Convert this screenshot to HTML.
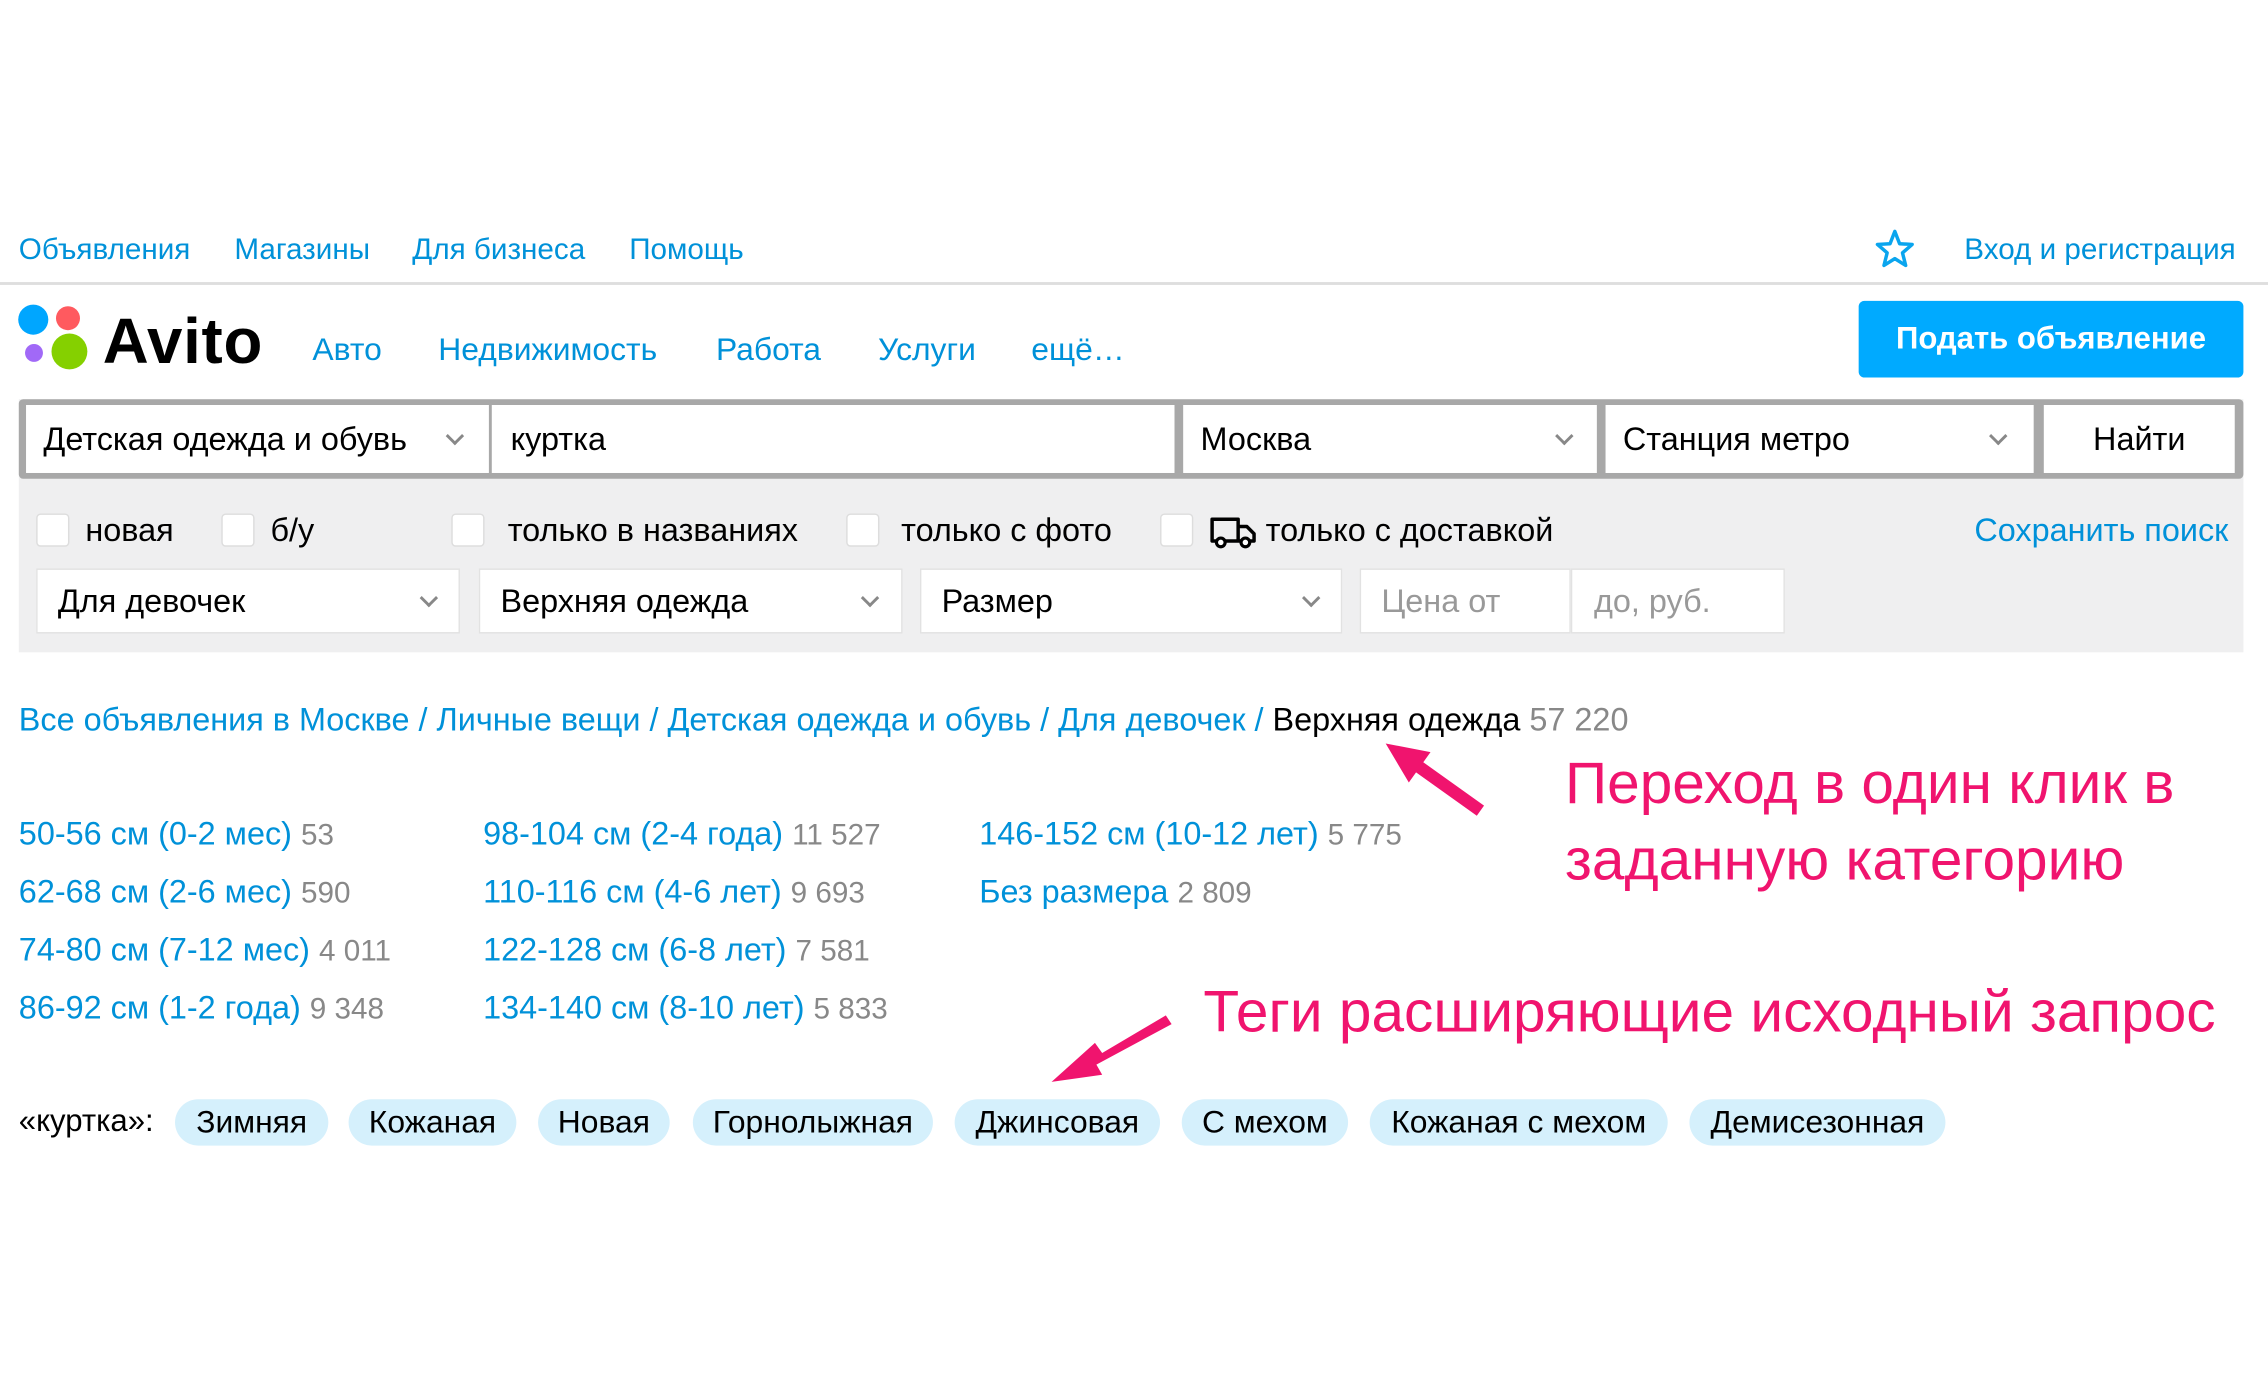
<!DOCTYPE html>
<html><head><meta charset="utf-8">
<style>
html,body{margin:0;padding:0;background:#fff;}
body{width:2268px;height:1381px;overflow:hidden;}
#w{position:absolute;left:0;top:0;width:1568px;height:955px;transform:scale(1.44643);transform-origin:0 0;font-family:"Liberation Sans",Arial,sans-serif;color:#000;}
.a{position:absolute;white-space:nowrap;}
.b{color:#0091d9;}
.g{color:#888;}
.box{position:absolute;background:#fff;box-sizing:border-box;}
.chev{position:absolute;width:7px;height:7px;border-right:2px solid #888;border-bottom:2px solid #888;transform:rotate(45deg);}
.cb{position:absolute;width:23px;height:23px;background:#fff;border:1px solid #ddd;border-radius:3px;box-sizing:border-box;top:355px;}
.pill{position:absolute;top:760px;height:32px;background:#d5f0fc;border-radius:16px;font-size:22px;line-height:32px;text-align:center;}
.pk{color:#f0146e;font-size:40.5px;}
.f{font-size:22.4px;}
.s{font-size:20.5px;}
</style></head><body><div id="w">
<div class="a b" style="left:13px;top:161px;font-size:20.5px;">Объявления</div>
<div class="a b" style="left:162px;top:161px;font-size:20.5px;">Магазины</div>
<div class="a b" style="left:285px;top:161px;font-size:20.5px;">Для бизнеса</div>
<div class="a b" style="left:435px;top:161px;font-size:20.5px;">Помощь</div>
<svg class="a" style="left:1296px;top:158px" width="28" height="28" viewBox="0 0 28 28"><polygon points="14,2 17.3,10.5 26,11 19.3,16.8 21.5,25.5 14,20.8 6.5,25.5 8.7,16.8 2,11 10.7,10.5" fill="none" stroke="#0aa5ee" stroke-width="2.4" stroke-linejoin="round"/></svg>
<div class="a b" style="left:1358px;top:161px;font-size:20.5px;">Вход и регистрация</div>
<div class="a" style="left:0;top:195px;width:1568px;height:2px;background:#dedede;"></div>

<svg class="a" style="left:10px;top:206px" width="56" height="56"><circle cx="13" cy="15" r="10.4" fill="#00a6ff"/><circle cx="37" cy="14" r="8.3" fill="#ff5a5f"/><circle cx="13.5" cy="38" r="6.2" fill="#a169f7"/><circle cx="38" cy="37" r="12.4" fill="#85d000"/></svg>
<div class="a" style="left:71px;top:212px;font-size:44px;font-weight:bold;letter-spacing:0.5px;">Avito</div>
<div class="a b" style="left:216px;top:229px;font-size:22px;">Авто</div>
<div class="a b" style="left:303px;top:229px;font-size:22px;">Недвижимость</div>
<div class="a b" style="left:495px;top:229px;font-size:22px;">Работа</div>
<div class="a b" style="left:607px;top:229px;font-size:22px;">Услуги</div>
<div class="a b" style="left:713px;top:229px;font-size:22px;">ещё…</div>
<div class="a" style="left:1285px;top:208px;width:266px;height:53px;background:#00aaff;border-radius:4px;color:#fff;font-weight:bold;font-size:21.5px;line-height:53px;text-align:center;">Подать объявление</div>

<div class="a" style="left:13px;top:276px;width:1538px;height:175px;background:#efeff0;"></div>
<div class="a" style="left:13px;top:276px;width:1538px;height:55px;background:#a8a8a8;border-radius:3px;"></div>
<div class="box" style="left:18px;top:280px;width:320px;height:47px;"></div>
<div class="a f" style="left:30px;top:291px;">Детская одежда и обувь</div><div class="chev" style="left:310px;top:297px"></div>
<div class="box" style="left:340px;top:280px;width:472px;height:47px;"></div>
<div class="a f" style="left:353px;top:291px;">куртка</div>
<div class="box" style="left:818px;top:280px;width:286px;height:47px;"></div>
<div class="a f" style="left:830px;top:291px;">Москва</div><div class="chev" style="left:1077px;top:297px"></div>
<div class="box" style="left:1110px;top:280px;width:296px;height:47px;"></div>
<div class="a f" style="left:1122px;top:291px;">Станция метро</div><div class="chev" style="left:1377px;top:297px"></div>
<div class="box" style="left:1413px;top:280px;width:132px;height:47px;"></div>
<div class="a f" style="left:1413px;top:291px;width:132px;text-align:center;">Найти</div>

<div class="cb" style="left:25px"></div><div class="a f" style="left:59px;top:354px;">новая</div>
<div class="cb" style="left:153px"></div><div class="a f" style="left:187px;top:354px;">б/у</div>
<div class="cb" style="left:312px"></div><div class="a f" style="left:351px;top:354px;">только в названиях</div>
<div class="cb" style="left:585px"></div><div class="a f" style="left:623px;top:354px;">только с фото</div>
<div class="cb" style="left:802px"></div>
<svg class="a" style="left:836px;top:356px" width="34" height="24" viewBox="0 0 34 24"><path d="M2 3h18v15H2z M20 8h6l5 5v5h-11z" fill="none" stroke="#000" stroke-width="2.4" stroke-linejoin="round"/><circle cx="8" cy="19" r="3" fill="#fff" stroke="#000" stroke-width="2.2"/><circle cx="25" cy="19" r="3" fill="#fff" stroke="#000" stroke-width="2.2"/></svg>
<div class="a f" style="left:875px;top:354px;">только с доставкой</div>
<div class="a b f" style="left:1365px;top:354px;">Сохранить поиск</div>

<div class="box" style="left:25px;top:393px;width:293px;height:45px;border:1px solid #e2e2e2;"></div>
<div class="a f" style="left:40px;top:403px;">Для девочек</div><div class="chev" style="left:292px;top:409px"></div>
<div class="box" style="left:331px;top:393px;width:293px;height:45px;border:1px solid #e2e2e2;"></div>
<div class="a f" style="left:346px;top:403px;">Верхняя одежда</div><div class="chev" style="left:597px;top:409px"></div>
<div class="box" style="left:636px;top:393px;width:292px;height:45px;border:1px solid #e2e2e2;"></div>
<div class="a f" style="left:651px;top:403px;">Размер</div><div class="chev" style="left:902px;top:409px"></div>
<div class="box" style="left:940px;top:393px;width:146px;height:45px;border:1px solid #e2e2e2;"></div>
<div class="a f" style="left:955px;top:403px;color:#999;">Цена от</div>
<div class="box" style="left:1086px;top:393px;width:148px;height:45px;border:1px solid #e2e2e2;"></div>
<div class="a f" style="left:1102px;top:403px;color:#999;">до, руб.</div>

<div class="a f" style="left:13px;top:485px;"><span class="b">Все объявления в Москве / Личные вещи / Детская одежда и обувь / Для девочек /</span> Верхняя одежда <span class="g">57 220</span></div>

<div class="a f" style="left:13px;top:564px;"><span class="b">50-56 см (0-2 мес)</span> <span class="g s">53</span></div>
<div class="a f" style="left:13px;top:604px;"><span class="b">62-68 см (2-6 мес)</span> <span class="g s">590</span></div>
<div class="a f" style="left:13px;top:644px;"><span class="b">74-80 см (7-12 мес)</span> <span class="g s">4 011</span></div>
<div class="a f" style="left:13px;top:684px;"><span class="b">86-92 см (1-2 года)</span> <span class="g s">9 348</span></div>
<div class="a f" style="left:334px;top:564px;"><span class="b">98-104 см (2-4 года)</span> <span class="g s">11 527</span></div>
<div class="a f" style="left:334px;top:604px;"><span class="b">110-116 см (4-6 лет)</span> <span class="g s">9 693</span></div>
<div class="a f" style="left:334px;top:644px;"><span class="b">122-128 см (6-8 лет)</span> <span class="g s">7 581</span></div>
<div class="a f" style="left:334px;top:684px;"><span class="b">134-140 см (8-10 лет)</span> <span class="g s">5 833</span></div>
<div class="a f" style="left:677px;top:564px;"><span class="b">146-152 см (10-12 лет)</span> <span class="g s">5 775</span></div>
<div class="a f" style="left:677px;top:604px;"><span class="b">Без размера</span> <span class="g s">2 809</span></div>

<div class="a pk" style="left:1082px;top:518px;">Переход в один клик в</div>
<div class="a pk" style="left:1082px;top:571px;">заданную категорию</div>
<div class="a pk" style="left:832px;top:676px;">Теги расширяющие исходный запрос</div>
<svg class="a" style="left:0;top:0" width="1568" height="955"><g fill="#f0146e"><path d="M1026 557 L984 527 L989 520 L958 514 L974 541 L979 534 L1021 564 Z"/><path d="M806 702 L762 728 L757 721 L727 748 L762 743 L758 736 L810 708 Z"/></g></svg>

<div class="a" style="left:13px;top:763px;font-size:21.5px;">«куртка»:</div>
<div class="pill" style="left:121px;width:106px;">Зимняя</div>
<div class="pill" style="left:241px;width:116px;">Кожаная</div>
<div class="pill" style="left:372px;width:91px;">Новая</div>
<div class="pill" style="left:479px;width:166px;">Горнолыжная</div>
<div class="pill" style="left:660px;width:142px;">Джинсовая</div>
<div class="pill" style="left:817px;width:115px;">С мехом</div>
<div class="pill" style="left:947px;width:206px;">Кожаная с мехом</div>
<div class="pill" style="left:1168px;width:177px;">Демисезонная</div>
</div></body></html>
